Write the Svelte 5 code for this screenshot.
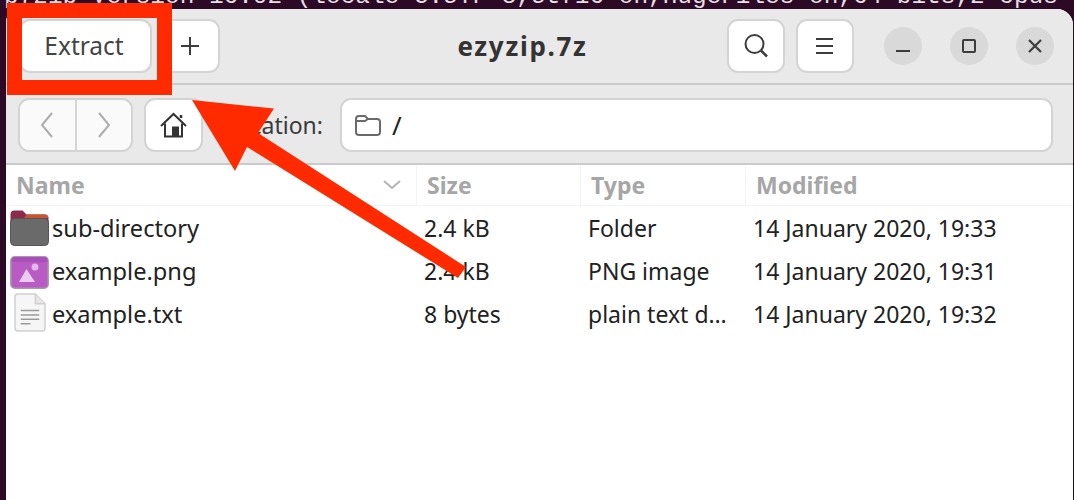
<script>
  const rows = [
    { name: 'sub-directory', icon: 'folder', size: '2.4 kB', type: 'Folder', mod: '14 January 2020, 19:33' },
    { name: 'example.png', icon: 'image', size: '2.4 kB', type: 'PNG image', mod: '14 January 2020, 19:31' },
    { name: 'example.txt', icon: 'text', size: '8 bytes', type: 'plain text d…', mod: '14 January 2020, 19:32' }
  ];
</script>

<div class="page">
  <div class="terminal"><span>p7zip Version 16.02 (locale=C.UTF-8,Utf16=on,HugeFiles=on,64 bits,2 cpus</span></div>
  <div class="window">
    <header class="head">
      <div class="group">
        <button class="btn extract">Extract</button>
        <button class="btn plus" aria-label="New">
          <svg width="20" height="20" viewBox="0 0 20 20"><path d="M10 1v18M1 10h18" stroke="#3d3d3d" stroke-width="2" fill="none"/></svg>
        </button>
      </div>
      <div class="title">ezyzip.7z</div>
      <div class="group">
        <button class="btn square" aria-label="Search">
          <svg width="26" height="26" viewBox="0 0 26 26" fill="none" stroke="#3d3d3d" stroke-width="2"><circle cx="11.5" cy="11" r="9"/><path d="M18 17.5l6 6" stroke-width="2.6"/></svg>
        </button>
        <button class="btn square" aria-label="Menu">
          <svg width="20" height="18" viewBox="0 0 20 18" stroke="#3d3d3d" stroke-width="2"><path d="M1 2h17M1 9h17M1 16h17"/></svg>
        </button>
      </div>
      <div class="controls">
        <span class="ctl"><svg width="16" height="16" viewBox="0 0 16 16" stroke="#3d3d3d" stroke-width="2"><path d="M1 13h14"/></svg></span>
        <span class="ctl"><svg width="16" height="16" viewBox="0 0 16 16" fill="none" stroke="#3d3d3d" stroke-width="2"><rect x="2" y="2" width="12" height="12" rx="1"/></svg></span>
        <span class="ctl"><svg width="16" height="16" viewBox="0 0 16 16" stroke="#3d3d3d" stroke-width="2.2"><path d="M2 2l12 12M14 2L2 14"/></svg></span>
      </div>
    </header>

    <div class="toolbar">
      <div class="nav">
        <button class="btn navbtn" aria-label="Back">
          <svg width="14" height="26" viewBox="0 0 14 26" fill="none" stroke="#adadad" stroke-width="2"><path d="M12 1L2 13l10 12"/></svg>
        </button>
        <button class="btn navbtn" aria-label="Forward">
          <svg width="14" height="26" viewBox="0 0 14 26" fill="none" stroke="#adadad" stroke-width="2"><path d="M2 1l10 12L2 25"/></svg>
        </button>
      </div>
      <button class="btn home" aria-label="Home">
        <svg width="28" height="26" viewBox="0 0 28 26" fill="none" stroke="#333" stroke-width="2"><path d="M1 14L13.500 2 26 14"/><path d="M5 11.500V24.500H22V11.500"/><path d="M13 24.500V15.500h5v9" fill="#333"/><path d="M21 3v3" stroke-width="2.500"/></svg>
      </button>
      <span class="label">Location:</span>
      <div class="entry">
        <svg width="26" height="22" viewBox="0 0 26 22" fill="none" stroke="#6a6a6a" stroke-width="2"><path d="M1 5a3 3 0 0 1 3-3h6l3 3h9a3 3 0 0 1 3 3v10a3 3 0 0 1-3 3H4a3 3 0 0 1-3-3z"/><path d="M1 7h9l3-2"/></svg>
        <span class="path">/</span>
      </div>
    </div>

    <div class="table">
      <div class="row headrow">
        <div class="hcell namehead">Name
          <svg width="18" height="10" viewBox="0 0 18 10" fill="none" stroke="#b4b4b4" stroke-width="2"><path d="M1 1l8 7 8-7"/></svg>
        </div>
        <div class="hcell">Size</div>
        <div class="hcell">Type</div>
        <div class="hcell">Modified</div>
      </div>
      {#each rows as r}
        <div class="row">
          <div class="cell namecell">
            <span class="icon icon-{r.icon}">
              {#if r.icon === 'folder'}
                <svg width="39" height="36" viewBox="0 0 39 36">
                  <path d="M0.500 4.500a4 4 0 0 1 4-4h8l4 4h18a4 4 0 0 1 4 4v6H0.500z" fill="#8d2a4a"/>
                  <path d="M16.500 4.500h18a4 4 0 0 1 4 3.500H14z" fill="#c9552f"/>
                  <rect x="0.500" y="8.500" width="38" height="27" rx="4" fill="#6a6a6a" stroke="#555" stroke-width="1"/>
                </svg>
              {:else if r.icon === 'image'}
                <svg width="39" height="33" viewBox="0 0 39 33">
                  <rect x="0.800" y="0.800" width="37.400" height="31.400" rx="4" fill="#b85cc4" stroke="#a99aad" stroke-width="1.500"/>
                  <path d="M1.600 4a3 3 0 0 1 3-3h30a3 3 0 0 1 3 3v2H1.600z" fill="#a94fb8"/>
                  <circle cx="25" cy="11" r="3.500" fill="#e3b8e8"/>
                  <path d="M9 26l7.500-13L25 26z" fill="#eacdee"/>
                </svg>
              {:else}
                <svg width="32" height="39" viewBox="0 0 33 40">
                  <path d="M3.500 1H22L32 11V36a3 3 0 0 1-3 3H4a3 3 0 0 1-3-3V4a3 3 0 0 1 2.500-3z" fill="#f6f6f6" stroke="#cfcfcf" stroke-width="1.500"/>
                  <path d="M22 1v10h10" fill="#e6e6e6" stroke="#cfcfcf" stroke-width="1.500"/>
                  <path d="M7 18h19M7 22.500h19M7 27h19M7 31.500h10" stroke="#9b9b9b" stroke-width="1.500"/>
                </svg>
              {/if}
            </span>
            <span>{r.name}</span>
          </div>
          <div class="cell">{r.size}</div>
          <div class="cell">{r.type}</div>
          <div class="cell">{r.mod}</div>
        </div>
      {/each}
    </div>
  </div>

  <div class="redbox"></div>
  <svg class="arrow" width="1074" height="500" viewBox="0 0 1074 500">
    <path d="M192 100L274 108.500L258 133L466 267L458 278L247 147L235 171z" fill="#ff2a00"/>
  </svg>
</div>

<style>
  :global(body) {
    margin: 0;
    background: #2c0a25;
  }
  .page {
    position: relative;
    width: 1074px;
    height: 500px;
    overflow: hidden;
    background: #2c0a25;
    font-family: "Noto Sans", "Open Sans", sans-serif;
    font-size: 23px;
    color: #222;
  }
  .terminal {
    height: 9px;
    overflow: hidden;
    padding-left: 4px;
    font-family: "Liberation Mono", monospace;
    font-size: 24.4px;
    line-height: 23px;
    color: #e6dfe4;
    white-space: nowrap;
  }
  .terminal span {
    display: block;
    margin-top: -15px;
  }
  .window {
    margin-left: 6px;
    width: 1067px;
    height: 491px;
    background: #fff;
    border-radius: 14px 16px 0 0;
    overflow: hidden;
    display: flex;
    flex-direction: column;
  }
  .head {
    height: 74px;
    display: flex;
    align-items: center;
    padding: 0 19px 0 13px;
    background: #e9e9e9;
    border-bottom: 2px solid #cacaca;
  }
  .group {
    display: flex;
    gap: 11px;
  }
  .head .group:first-child {
    gap: 8px;
  }
  .btn {
    box-sizing: border-box;
    height: 54px;
    padding: 0;
    border: 2px solid #d4d4d4;
    border-radius: 11px;
    background: #fff;
    font: inherit;
    color: #444;
    display: flex;
    align-items: center;
    justify-content: center;
  }
  .extract {
    width: 133px;
    padding-right: 3px;
    font-size: 24.5px;
    line-height: 1;
  }
  .plus {
    width: 60px;
  }
  .square {
    width: 58px;
  }
  .title {
    flex: 1;
    text-align: center;
    padding-left: 98px;
    font-weight: 700;
    color: #333;
    font-size: 26px;
    letter-spacing: 1.7px;
  }
  .controls {
    display: flex;
    gap: 28px;
    margin-left: 30px;
  }
  .ctl {
    width: 38px;
    height: 38px;
    border-radius: 50%;
    background: #d9d9d9;
    display: flex;
    align-items: center;
    justify-content: center;
  }
  .toolbar {
    height: 76px;
    display: flex;
    align-items: center;
    padding: 2px 20px 0 12px;
    background: #e9e9e9;
    border-bottom: 2px solid #cacaca;
  }
  .nav {
    display: flex;
    width: 115px;
  }
  .navbtn {
    flex: 1;
    background: #fafafa;
  }
  .navbtn:first-child {
    border-radius: 11px 0 0 11px;
    border-right: 1px solid #d4d4d4;
  }
  .navbtn:last-child {
    border-radius: 0 11px 11px 0;
    border-left: 1px solid #d4d4d4;
  }
  .home {
    width: 59px;
    margin-left: 11px;
  }
  .label {
    width: 120px;
    text-align: right;
    color: #3a3a3a;
  }
  .entry {
    box-sizing: border-box;
    margin-left: 17px;
    flex: 1;
    height: 54px;
    border: 2px solid #d4d4d4;
    border-radius: 11px;
    background: #fff;
    display: flex;
    align-items: center;
    gap: 11px;
    padding-left: 13px;
  }
  .path {
    font-size: 26px;
    color: #222;
  }
  .table {
    display: flex;
    flex-direction: column;
  }
  .row {
    display: grid;
    grid-template-columns: 410px 164px 165px 1fr;
    height: 43px;
    align-items: center;
  }
  .headrow {
    height: 40px;
    align-items: stretch;
    border-bottom: 1px solid #f3f3f3;
  }
  .hcell {
    display: flex;
    align-items: center;
    padding: 0 0 0 10px;
    font-weight: 700;
    color: #a6a6a6;
    border-left: 1px solid #f3f3f3;
    justify-content: flex-start;
  }
  .namehead {
    justify-content: space-between;
    border-left: 0;
    padding-right: 15px;
  }
  .cell {
    padding: 0 0 0 8px;
    white-space: nowrap;
  }
  .namecell {
    display: flex;
    align-items: center;
    padding-left: 3px;
    font-size: 23.6px;
  }
  .icon {
    width: 41px;
    margin-right: 2px;
    display: flex;
    justify-content: center;
  }
  .icon-image {
    margin-top: 4px;
  }
  .icon-text {
    margin-top: -2px;
  }
  .redbox {
    position: absolute;
    left: 7px;
    top: 3px;
    width: 135px;
    height: 62px;
    border: 15px solid #ff2a00;
  }
  .arrow {
    position: absolute;
    left: 0;
    top: 0;
    pointer-events: none;
  }
</style>
